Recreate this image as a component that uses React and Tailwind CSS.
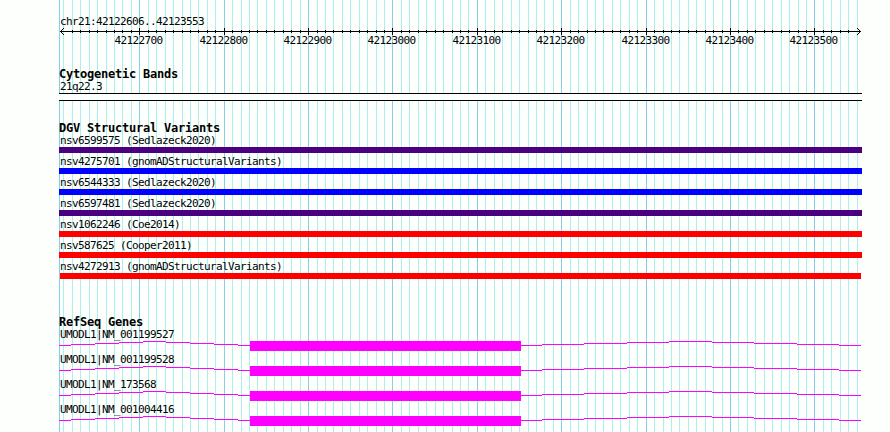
import React from 'react';

const START = 42122606;
const SCALE = 0.843752;
const toX = (pos) => Math.round(60.0616 + (pos - START) * SCALE);

const ticks = Array.from({ length: 95 }, (_, i) => {
  const pos = 42122610 + i * 10;
  return { pos, x: toX(pos), major: pos % 100 === 0 };
});

const variants = [
  { label: 'nsv6599575 (Sedlazeck2020)', color: 'bg-[#4b0082]' },
  { label: 'nsv4275701 (gnomADStructuralVariants)', color: 'bg-[#0000ff]' },
  { label: 'nsv6544333 (Sedlazeck2020)', color: 'bg-[#0000ff]' },
  { label: 'nsv6597481 (Sedlazeck2020)', color: 'bg-[#4b0082]' },
  { label: 'nsv1062246 (Coe2014)', color: 'bg-[#ff0000]' },
  { label: 'nsv587625 (Cooper2011)', color: 'bg-[#ff0000]' },
  { label: 'nsv4272913 (gnomADStructuralVariants)', color: 'bg-[#ff0000] ml-px mr-px' },
];

const genes = ['NM_001199527', 'NM_001199528', 'NM_173568', 'NM_001004416'];

// Intron segments: [x, y, width], relative to the track
const introns = [
  [0, 4, 12], [12, 3, 24], [36, 2, 24], [60, 1, 24], [84, 0, 23],
  [107, 1, 24], [131, 2, 24], [155, 3, 24], [179, 4, 12],
  [462, 4, 21], [483, 3, 42], [525, 2, 43], [568, 1, 42], [610, 0, 43],
  [653, 1, 42], [695, 2, 43], [738, 3, 42], [780, 4, 22],
];

// Fixed-width text, 6px per character
const Label = ({ children }) => (
  <div className="h-3 pl-px text-[11px] leading-[13px] tracking-[-0.622px] whitespace-pre">{children}</div>
);

// Fixed-width bold text, 7px per character
const Title = ({ children }) => (
  <h2 className="h-3 text-[12px] leading-3 font-bold tracking-[-0.224px] whitespace-pre">{children}</h2>
);

const Grid = () => (
  <svg className="absolute inset-0" width="890" height="432" shapeRendering="crispEdges">
    {ticks.map((t) => (
      <rect key={t.pos} x={t.x} y="0" width="1" height="432" fill={t.major ? '#87ceeb' : '#afeeee'} />
    ))}
    <rect x="59" y="0" width="1" height="432" fill="#87ceeb" />
  </svg>
);

const Ruler = () => (
  <div className="relative h-5">
    <svg className="block" width="803" height="7" shapeRendering="crispEdges">
      <rect x="1" y="3" width="801" height="1" />
      {ticks.slice(1, -1).map((t) => (
        <rect
          key={t.pos}
          x={t.x - 59}
          y={t.major ? 0 : 2}
          width="1"
          height={t.major ? 7 : 3}
        />
      ))}
      {[1, 2, 3].map((d) => (
        <g key={d}>
          <rect x={1 + d} y={3 - d} width="1" height="1" />
          <rect x={1 + d} y={3 + d} width="1" height="1" />
          <rect x={801 - d} y={3 - d} width="1" height="1" />
          <rect x={801 - d} y={3 + d} width="1" height="1" />
        </g>
      ))}
    </svg>
    {ticks.filter((t) => t.major).map((t) => (
      <span
        key={t.pos}
        className="absolute top-1.5 text-[11px] leading-[13px] tracking-[-0.622px]"
        style={{ left: t.x - 59 - 24.5 }}
      >
        {t.pos}
      </span>
    ))}
  </div>
);

const Gene = ({ name }) => (
  <div className="h-[25px]">
    <Label>UMODL1|{name}</Label>
    <svg className="block" width="803" height="13" shapeRendering="crispEdges" fill="#ff00ff">
      {introns.map(([x, y, w]) => (
        <rect key={x} x={x} y={y + 1} width={w} height="1" />
      ))}
      <rect x="191" y="1" width="271" height="10" />
    </svg>
  </div>
);

export default function App() {
  return (
    <div className="relative h-[432px] w-[890px] overflow-hidden bg-[#fdfffc] font-['DejaVu_Sans_Mono',monospace] text-black">
      <Grid />
      <main className="relative ml-[59px] w-[803px] pt-[15px]">
        <Label>chr21:42122606..42123553</Label>
        <div className="pt-px">
          <Ruler />
        </div>

        <section className="mt-5">
          <Title>Cytogenetic Bands</Title>
          <Label>21q22.3</Label>
          <div className="mt-px h-2 border-y border-black bg-[#fdfffc]" />
        </section>

        <section className="mt-[21px]">
          <Title>DGV Structural Variants</Title>
          {variants.map((v) => (
            <div key={v.label} className="h-[21px]">
              <Label>{v.label}</Label>
              <div className={`mt-px h-1.5 ${v.color}`} />
            </div>
          ))}
        </section>

        <section className="mt-[35px]">
          <Title>RefSeq Genes</Title>
          {genes.map((name) => (
            <Gene key={name} name={name} />
          ))}
        </section>
      </main>
    </div>
  );
}
